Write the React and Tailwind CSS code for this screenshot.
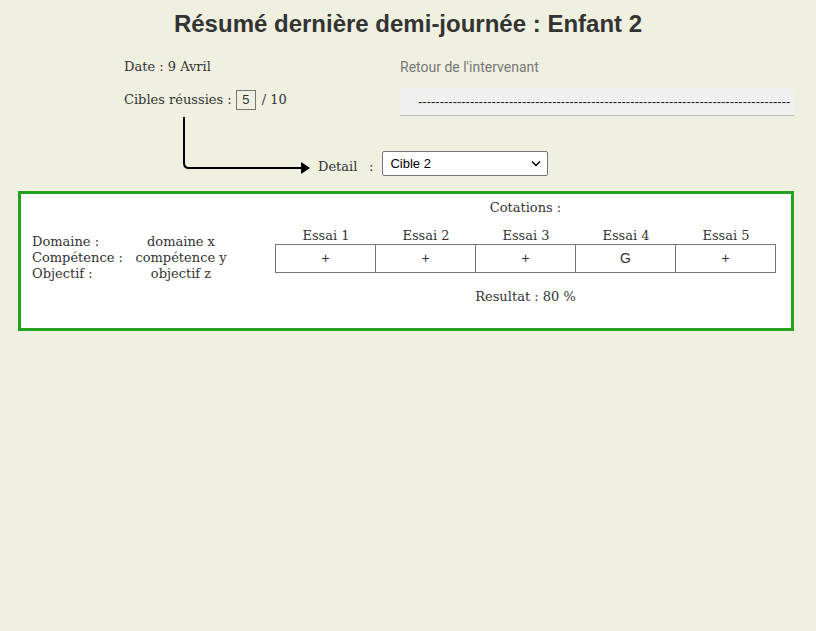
import React from "react";

const serif = { fontFamily: '"DejaVu Serif", "Liberation Serif", serif' };

export default function App() {
  const essais = [
    { h: "Essai 1", v: "+" },
    { h: "Essai 2", v: "+" },
    { h: "Essai 3", v: "+" },
    { h: "Essai 4", v: "G" },
    { h: "Essai 5", v: "+" },
  ];
  return (
    <div className="w-[816px] h-[631px] bg-[#f0f0e1] text-[#333] overflow-hidden" style={serif}>
      <h1 className="pt-[10px] h-[38px] text-center text-[24px] leading-[28px] font-bold text-[#333] font-['Liberation_Sans',Arial,sans-serif]">
        Résumé dernière demi-journée : Enfant 2
      </h1>

      <div className="mt-[20px] flex">
        <div className="ml-[124px] w-[276px] text-[13px]">
          <div className="h-[18px] leading-[18px]">Date : 9 Avril</div>
          <div className="mt-[14px] h-[20px] flex items-center">
            <span>Cibles réussies :</span>
            <span className="ml-[4px] w-[20px] h-[20px] border border-[#777] bg-[#f0f0e1] flex items-center justify-center text-[13px] font-['Liberation_Sans',Arial,sans-serif]">5</span>
            <span className="ml-[6px]">/ 10</span>
          </div>
        </div>
        <div className="w-[394px]">
          <div className="h-[18px] leading-[18px] text-[14px] text-[#777] font-['Roboto',sans-serif]">Retour de l'intervenant</div>
          <div className="mt-[12px] h-[28px] bg-[#f0f0f0] rounded-t-[4px] border-b border-[#bbb] pl-[18px] flex items-center">
            <span className="whitespace-nowrap text-[13px] leading-[12px] text-[#222] font-['Liberation_Sans',Arial,sans-serif]">
              {"-".repeat(86)}
            </span>
          </div>
        </div>
      </div>

      <div className="flex items-end h-[60px]">
        <svg className="ml-[182px] shrink-0" width="130" height="60" viewBox="0 0 130 60">
          <path d="M2 1 V47 Q2 52 7 52 H121" fill="none" stroke="#000" strokeWidth="2" />
          <polygon points="119,46 128,52 119,58" fill="#000" />
        </svg>
        <div className="ml-[6px] h-[25px] pt-[3px] leading-[25px] text-[13px] w-[51px]">Detail</div>
        <div className="h-[25px] pt-[3px] leading-[25px] text-[13px]">:</div>
        <div className="ml-[9px] w-[166px] h-[25px] bg-white border border-[#767676] rounded-[2px] flex items-center justify-between pl-[7px] pr-[6px] text-[13px] text-black font-['Liberation_Sans',Arial,sans-serif]">
          <span>Cible 2</span>
          <svg width="10" height="7" viewBox="0 0 10 7">
            <path d="M1 1.5 L5 5.5 L9 1.5" fill="none" stroke="#000" strokeWidth="1.5" />
          </svg>
        </div>
      </div>

      <div className="mt-[15px] ml-[18px] w-[776px] h-[140px] border-[3px] border-[#22a31f] bg-white flex text-[13px]">
        <div className="ml-[11px] mt-[40px] w-[243px] grid grid-cols-[100px_98px] auto-rows-[16px] leading-[16px] self-start">
          <div>Domaine :</div>
          <div className="text-center">domaine x</div>
          <div>Compétence :</div>
          <div className="text-center">compétence y</div>
          <div>Objectif :</div>
          <div className="text-center">objectif z</div>
        </div>
        <div className="w-[501px] pt-[6px]">
          <div className="h-[16px] leading-[16px] text-center">Cotations :</div>
          <div className="mt-[12px] grid grid-cols-5 pl-[1px] h-[16px] leading-[16px]">
            {essais.map((e) => (
              <div key={e.h} className="text-center">{e.h}</div>
            ))}
          </div>
          <div className="grid grid-cols-5 border-l border-t border-b border-[#777] h-[29px]">
            {essais.map((e) => (
              <div key={e.h} className="border-r border-[#777] flex items-center justify-center text-[14px] font-['Liberation_Sans',Arial,sans-serif]">
                {e.v}
              </div>
            ))}
          </div>
          <div className="mt-[16px] h-[16px] leading-[16px] text-center">Resultat : 80 %</div>
        </div>
      </div>
    </div>
  );
}
